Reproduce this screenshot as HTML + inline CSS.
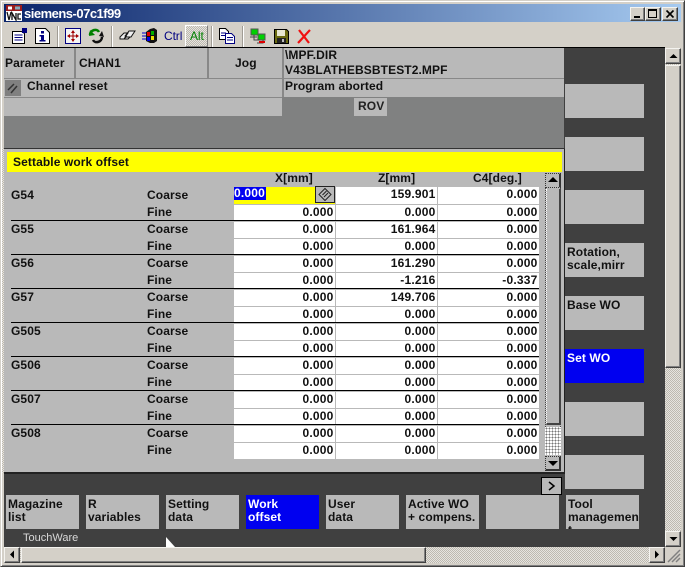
<!DOCTYPE html>
<html><head><meta charset="utf-8"><style>
html,body{margin:0;padding:0}
body{width:685px;height:567px;overflow:hidden;position:relative;background:#d4d0c8;font-family:"Liberation Sans",sans-serif;font-size:12px;font-weight:bold;color:#111}
div,svg{position:absolute;box-sizing:border-box}
.t{white-space:nowrap;letter-spacing:.1px;line-height:13px}
.g{background:#b9b9b9}
.k{background:#b9b9b9;width:73px;height:34px;top:495px;padding:3px 2px;line-height:13px;letter-spacing:.1px;overflow:hidden;white-space:nowrap}
.s{background:#b9b9b9;left:565px;width:79px;height:34px;padding:3px 2px;line-height:13px;letter-spacing:.1px;overflow:hidden;white-space:nowrap}
.b{background:#d4d0c8;border:1px solid;border-color:#f4f3ef #404040 #404040 #f4f3ef;box-shadow:inset -1px -1px 0 #808080}
.l{background:#888;}
table{position:absolute;left:234px;top:187px;border-collapse:collapse;table-layout:fixed;width:305px}
td{width:102px;height:17px;padding:0 1px 0 0;background:#fff;border-right:1px solid #b9b9b9;border-bottom:1px solid #b9b9b9;text-align:right;line-height:15px;letter-spacing:.2px;box-sizing:border-box;vertical-align:top}
.h{background:#000;height:1px;left:11px;width:528px}
.tb{height:21px;width:2px;top:26px;background:#fff;border-left:1px solid #a09c94}
.ha{background-color:#e6e4df;background-image:linear-gradient(45deg,#bdb9b0 25%,transparent 25%,transparent 75%,#bdb9b0 75%),linear-gradient(45deg,#bdb9b0 25%,transparent 25%,transparent 75%,#bdb9b0 75%);background-size:2px 2px;background-position:0 0,1px 1px}
</style></head><body>
<div style="left:0;top:0;width:685px;height:567px;border:1px solid;border-color:#d4d0c8 #404040 #404040 #d4d0c8;box-shadow:inset 1px 1px 0 #fff,inset -1px -1px 0 #808080"></div>
<div style="left:4px;top:4px;width:677px;height:18px;background:linear-gradient(90deg,#0a246a,#a6caf0)"></div>
<svg style="left:6px;top:5px" width="16" height="16" viewBox="0 0 16 16"><rect width="16" height="16" fill="#fff"/><rect x="0" y="0" width="16" height="6" fill="#9c1c1c"/><rect x="2" y="1.5" width="4" height="3" fill="#fff"/><rect x="9" y="1.5" width="5" height="3" fill="#8ab"/><path d="M1 7l2 8 2-8M6 15V8l4 7V8M15 9h-3v5h3" stroke="#111" stroke-width="1.3" fill="none"/></svg>
<div class="t" style="left:24px;top:6px;color:#fff;font-size:13px;line-height:15px;letter-spacing:-.5px">siemens-07c1f99</div>
<div style="left:630px;top:7px;width:15px;height:14px" class="b"></div><div style="left:634px;top:16px;width:6px;height:2px;background:#000"></div>
<div style="left:645px;top:7px;width:16px;height:14px" class="b"></div><div style="left:648px;top:9px;width:9px;height:9px;border:1px solid #000;border-top-width:2px"></div>
<div style="left:662px;top:7px;width:16px;height:14px" class="b"></div>
<svg style="left:662px;top:7px" width="16" height="14"><path d="M4.500 3.500l7 7M11.500 3.500l-7 7" stroke="#000" stroke-width="1.600"/></svg>

<!-- toolbar -->
<svg style="left:11px;top:28px" width="17" height="16" viewBox="0 0 17 16"><path d="M1.500 3.500h9l3 2v10h-12z" fill="#fff" stroke="#000"/><path d="M3.500 7h8M3.500 9.500h8M3.500 12h8" stroke="#000080"/><rect x="11" y="0" width="5" height="5" fill="#000080"/></svg>
<svg style="left:35px;top:28px" width="15" height="16" viewBox="0 0 15 16"><path d="M.5.500h10l4 4v11H.5z" fill="#fff" stroke="#000"/><path d="M6 3h3v2.500H6zM4.500 7H9v5h1.500v1.500h-6V12H6V8.500H4.500z" fill="#000080"/></svg>
<div class="tb" style="left:57px"></div>
<svg style="left:65px;top:28px" width="16" height="16" viewBox="0 0 16 16"><rect x=".5" y=".5" width="15" height="15" fill="#f4f4f4" stroke="#000080"/><path d="M8 2l2 3H6zM8 14l2-3H6zM2 8l3-2v4zM14 8l-3-2v4z" fill="#a00000"/><path d="M8 5v6M5 8h6" stroke="#a00000"/></svg>
<svg style="left:88px;top:28px" width="17" height="16" viewBox="0 0 17 16"><path d="M2 7c0-5 7-7 9-3" stroke="#008000" stroke-width="2.500" fill="none"/><path d="M1 8l1-6 5 5z" fill="#008000"/><path d="M14 9c0 5-7 7-9 3" stroke="#111" stroke-width="2.500" fill="none"/><path d="M16 9l-5-1 3-5z" fill="#111"/></svg>
<div class="tb" style="left:111px"></div>
<svg style="left:119px;top:30px" width="17" height="12" viewBox="0 0 17 12"><path d="M1 7l4-4h4L5 9H1zM6 6l4-5h6l-4 6H8zM5 9h4l2-2H7z" fill="#eee" stroke="#111"/></svg>
<svg style="left:142px;top:28px" width="17" height="16" viewBox="0 0 17 16"><path d="M0 5h4M0 8h4M0 11h4" stroke="#00c" /><path d="M4 4l4-3v14l-4-2z" fill="#111"/><path d="M8 1l4-1 3 2v11l-3 2-4 0z" fill="#111"/><rect x="5" y="4" width="3" height="4" fill="#e00000"/><rect x="9" y="3" width="3" height="4" fill="#00b000"/><rect x="5" y="9" width="3" height="4" fill="#0000e0"/><rect x="9" y="8" width="3" height="4" fill="#e8e000"/></svg>
<div class="t" style="left:164px;top:29px;color:#000080;font-weight:normal;font-size:12px;letter-spacing:-.1px;line-height:15px">Ctrl</div>
<div style="left:185px;top:25px;width:23px;height:22px;border:1px solid;border-color:#fff #808080 #808080 #fff" class="ha"></div>
<div class="t" style="left:190px;top:29px;color:#008000;font-weight:normal;font-size:12px;letter-spacing:-.1px;line-height:15px">Alt</div>
<div class="tb" style="left:211px"></div>
<svg style="left:219px;top:28px" width="17" height="16" viewBox="0 0 17 16"><path d="M.5.500h6l3 3v8H.5z" fill="#fff" stroke="#000"/><path d="M6.500 5.500h6l3 3v7h-9z" fill="#fff" stroke="#000080"/><path d="M2 5h5M2 7.500h4M8 9.500h6M8 12h6" stroke="#000080"/></svg>
<div class="tb" style="left:242px"></div>
<svg style="left:250px;top:28px" width="17" height="17" viewBox="0 0 17 17"><rect x="1" y="1" width="7" height="6" fill="#00d000" stroke="#555"/><rect x="8" y="6" width="7" height="6" fill="#00d000" stroke="#555"/><path d="M0 9h7M4 7v5h6M13 12v3h-6" stroke="#444" fill="none"/><rect x="9" y="13" width="6" height="2" fill="#e00000"/></svg>
<svg style="left:274px;top:29px" width="15" height="15" viewBox="0 0 15 15"><path d="M.5.500h12l2 2v12H.500z" fill="#6a6a10" stroke="#000"/><rect x="3" y="1" width="8" height="6" fill="#e8e8d0"/><rect x="3" y="9" width="9" height="5" fill="#222"/><rect x="8" y="10" width="2" height="3" fill="#bbb"/></svg>
<svg style="left:297px;top:29px" width="15" height="15" viewBox="0 0 15 15"><path d="M2 1l10 13M13 1C9 5 5 10 1 14" stroke="#f01010" stroke-width="2.200" fill="none"/></svg>

<!-- content frame -->
<div style="left:4px;top:47px;width:661px;height:1px;background:#000"></div>
<div style="left:4px;top:48px;width:661px;height:499px;background:#404040"></div>
<div class="ha" style="left:2px;top:148px;width:2px;height:325px"></div>

<!-- header -->
<div class="g" style="left:4px;top:48px;width:560px;height:68px"></div>
<div style="left:282px;top:97px;width:282px;height:51px;background:#808181"></div>
<div style="left:4px;top:116px;width:560px;height:32px;background:#808181"></div>
<div class="g" style="left:284px;top:79px;width:280px;height:18px"></div>
<div class="l" style="left:74px;top:48px;width:2px;height:30px"></div>
<div class="l" style="left:207px;top:48px;width:2px;height:30px"></div>
<div class="l" style="left:282px;top:48px;width:2px;height:49px"></div>
<div class="l" style="left:4px;top:78px;width:560px;height:1px"></div>
<div class="l" style="left:4px;top:97px;width:278px;height:1px"></div>
<div class="t" style="left:5px;top:57px">Parameter</div>
<div class="t" style="left:79px;top:57px">CHAN1</div>
<div class="t" style="left:235px;top:57px">Jog</div>
<div class="t" style="left:285px;top:49px">\MPF.DIR</div>
<div class="t" style="left:285px;top:64px">V43BLATHEBSBTEST2.MPF</div>
<div class="t" style="left:27px;top:80px">Channel reset</div>
<div class="t" style="left:285px;top:80px">Program aborted</div>
<div style="left:5px;top:80px;width:16px;height:16px;background:#808080"></div>
<svg style="left:5px;top:80px" width="16" height="16"><path d="M3 10l6-6M6 13l6-7" stroke="#333" stroke-width="1.500"/></svg>
<div class="g" style="left:354px;top:98px;width:33px;height:18px"></div>
<div class="t" style="left:358px;top:100px;color:#222">ROV</div>

<!-- panel -->
<div style="left:4px;top:148px;width:561px;height:1px;background:#333"></div>
<div class="g" style="left:4px;top:149px;width:560px;height:323px"></div>
<div style="left:4px;top:472px;width:561px;height:2px;background:#222"></div>
<div style="left:564px;top:149px;width:1px;height:325px;background:#222"></div>
<div style="left:7px;top:152px;width:555px;height:20px;background:#ff0"></div>
<div class="t" style="left:13px;top:156px">Settable work offset</div>
<div class="t" style="left:275px;top:172px">X[mm]</div>
<div class="t" style="left:378px;top:172px">Z[mm]</div>
<div class="t" style="left:473px;top:172px">C4[deg.]</div>

<div class="t" style="left:11px;top:189px">G54</div>
<div class="t" style="left:11px;top:223px">G55</div>
<div class="t" style="left:11px;top:257px">G56</div>
<div class="t" style="left:11px;top:291px">G57</div>
<div class="t" style="left:11px;top:325px">G505</div>
<div class="t" style="left:11px;top:359px">G506</div>
<div class="t" style="left:11px;top:393px">G507</div>
<div class="t" style="left:11px;top:427px">G508</div>

<div class="t" style="left:147px;top:189px">Coarse</div><div class="t" style="left:147px;top:206px">Fine</div>
<div class="t" style="left:147px;top:223px">Coarse</div><div class="t" style="left:147px;top:240px">Fine</div>
<div class="t" style="left:147px;top:257px">Coarse</div><div class="t" style="left:147px;top:274px">Fine</div>
<div class="t" style="left:147px;top:291px">Coarse</div><div class="t" style="left:147px;top:308px">Fine</div>
<div class="t" style="left:147px;top:325px">Coarse</div><div class="t" style="left:147px;top:342px">Fine</div>
<div class="t" style="left:147px;top:359px">Coarse</div><div class="t" style="left:147px;top:376px">Fine</div>
<div class="t" style="left:147px;top:393px">Coarse</div><div class="t" style="left:147px;top:410px">Fine</div>
<div class="t" style="left:147px;top:427px">Coarse</div><div class="t" style="left:147px;top:444px">Fine</div>

<table>
<tr><td style="background:#ff0;width:101px"></td><td>159.901</td><td>0.000</td></tr>
<tr><td>0.000</td><td>0.000</td><td>0.000</td></tr>
<tr><td>0.000</td><td>161.964</td><td>0.000</td></tr>
<tr><td>0.000</td><td>0.000</td><td>0.000</td></tr>
<tr><td>0.000</td><td>161.290</td><td>0.000</td></tr>
<tr><td>0.000</td><td>-1.216</td><td>-0.337</td></tr>
<tr><td>0.000</td><td>149.706</td><td>0.000</td></tr>
<tr><td>0.000</td><td>0.000</td><td>0.000</td></tr>
<tr><td>0.000</td><td>0.000</td><td>0.000</td></tr>
<tr><td>0.000</td><td>0.000</td><td>0.000</td></tr>
<tr><td>0.000</td><td>0.000</td><td>0.000</td></tr>
<tr><td>0.000</td><td>0.000</td><td>0.000</td></tr>
<tr><td>0.000</td><td>0.000</td><td>0.000</td></tr>
<tr><td>0.000</td><td>0.000</td><td>0.000</td></tr>
<tr><td>0.000</td><td>0.000</td><td>0.000</td></tr>
<tr><td>0.000</td><td>0.000</td><td>0.000</td></tr>
</table>
<div class="h" style="top:220px"></div><div class="h" style="top:254px"></div><div class="h" style="top:288px"></div><div class="h" style="top:322px"></div><div class="h" style="top:356px"></div><div class="h" style="top:390px"></div><div class="h" style="top:424px"></div>
<div class="t" style="left:234px;top:187px;width:32px;height:13px;background:#0000f0;color:#fff;letter-spacing:.2px">0.000</div>
<div style="left:315px;top:186px;width:20px;height:17px;background:#b9b9b9;border:1px solid #222"></div>
<svg style="left:316px;top:187px" width="18" height="15" viewBox="0 0 18 15"><path d="M9 1.500l6 6-6 6-6-6z" fill="none" stroke="#222"/><path d="M6.500 8l4-4M8 10l4-4" stroke="#222"/></svg>

<!-- inner scrollbar -->
<div style="left:545px;top:173px;width:16px;height:298px;border:1px dotted #444;border-top:0;border-bottom:0"></div>
<div style="left:545px;top:173px;width:16px;height:15px;background:#b9b9b9;border:1px dotted #333;border-right:2px solid #333"></div>
<svg style="left:548px;top:177px" width="10" height="6"><path d="M5 0l5 5H0z" fill="#000"/></svg>
<div style="left:546px;top:189px;width:15px;height:236px;background:#b9b9b9;border-right:2px solid #444;border-bottom:2px solid #444;border-left:1px dotted #fff"></div>
<div style="left:545px;top:427px;width:16px;height:28px;background-color:#fff;background-image:radial-gradient(#777 .8px,transparent .9px);background-size:3px 3px"></div>
<div style="left:545px;top:456px;width:16px;height:15px;background:#b9b9b9;border:1px dotted #333;border-right:2px solid #333;border-bottom:2px solid #333"></div>
<svg style="left:548px;top:461px" width="10" height="6"><path d="M5 5L10 0H0z" fill="#000"/></svg>

<!-- > button -->
<div style="left:541px;top:477px;width:21px;height:18px;background:#b9b9b9;border:1px solid #000"></div>
<svg style="left:541px;top:477px" width="21" height="18"><path d="M8 5l5 4-5 4" stroke="#000" stroke-width="1.500" fill="none"/></svg>

<!-- right softkeys -->
<div class="s" style="top:84px"></div>
<div class="s" style="top:137px"></div>
<div class="s" style="top:190px"></div>
<div class="s" style="top:243px">Rotation,<br>scale,mirr</div>
<div class="s" style="top:296px">Base WO</div>
<div class="s" style="top:349px;background:#0000f0;color:#fff">Set WO</div>
<div class="s" style="top:402px"></div>
<div class="s" style="top:455px"></div>

<!-- bottom softkeys -->
<div class="k" style="left:6px">Magazine<br>list</div>
<div class="k" style="left:86px">R<br>variables</div>
<div class="k" style="left:166px">Setting<br>data</div>
<div class="k" style="left:246px;background:#0000f0;color:#fff">Work<br>offset</div>
<div class="k" style="left:326px">User<br>data</div>
<div class="k" style="left:406px">Active WO<br>+ compens.</div>
<div class="k" style="left:486px"></div>
<div class="k" style="left:566px">Tool<br>managemen<br>t</div>
<div class="t" style="left:23px;top:532px;color:#d8d8d8;font-weight:normal;font-size:11px;letter-spacing:0">TouchWare</div>
<svg style="left:165px;top:537px" width="12" height="11"><path d="M1 0v10h9z" fill="#fff"/></svg>

<!-- window scrollbars -->
<div class="ha" style="left:665px;top:48px;width:16px;height:499px"></div>
<div class="b" style="left:665px;top:48px;width:16px;height:16px"></div>
<svg style="left:669px;top:53px" width="9" height="6"><path d="M4.500 1l4 4H.500z" fill="#000"/></svg>
<div class="b" style="left:665px;top:65px;width:16px;height:303px"></div>
<div class="b" style="left:665px;top:531px;width:16px;height:16px"></div>
<svg style="left:669px;top:536px" width="9" height="6"><path d="M4.500 5l4-4H.500z" fill="#000"/></svg>
<div class="ha" style="left:4px;top:547px;width:677px;height:16px"></div>
<div class="b" style="left:4px;top:547px;width:16px;height:16px"></div>
<svg style="left:9px;top:550px" width="6" height="9"><path d="M1 4.500l4-4v8z" fill="#000"/></svg>
<div class="b" style="left:21px;top:547px;width:405px;height:16px"></div>
<div class="b" style="left:649px;top:547px;width:16px;height:16px"></div>
<svg style="left:654px;top:550px" width="6" height="9"><path d="M5 4.500l-4-4v8z" fill="#000"/></svg>
<div style="left:665px;top:547px;width:16px;height:16px;background:#d4d0c8"></div>
<svg style="left:665px;top:547px" width="16" height="16"><path d="M15 3L3 15M15 7L7 15M15 11l-4 4" stroke="#808080" stroke-width="1.500"/></svg>
</body></html>
